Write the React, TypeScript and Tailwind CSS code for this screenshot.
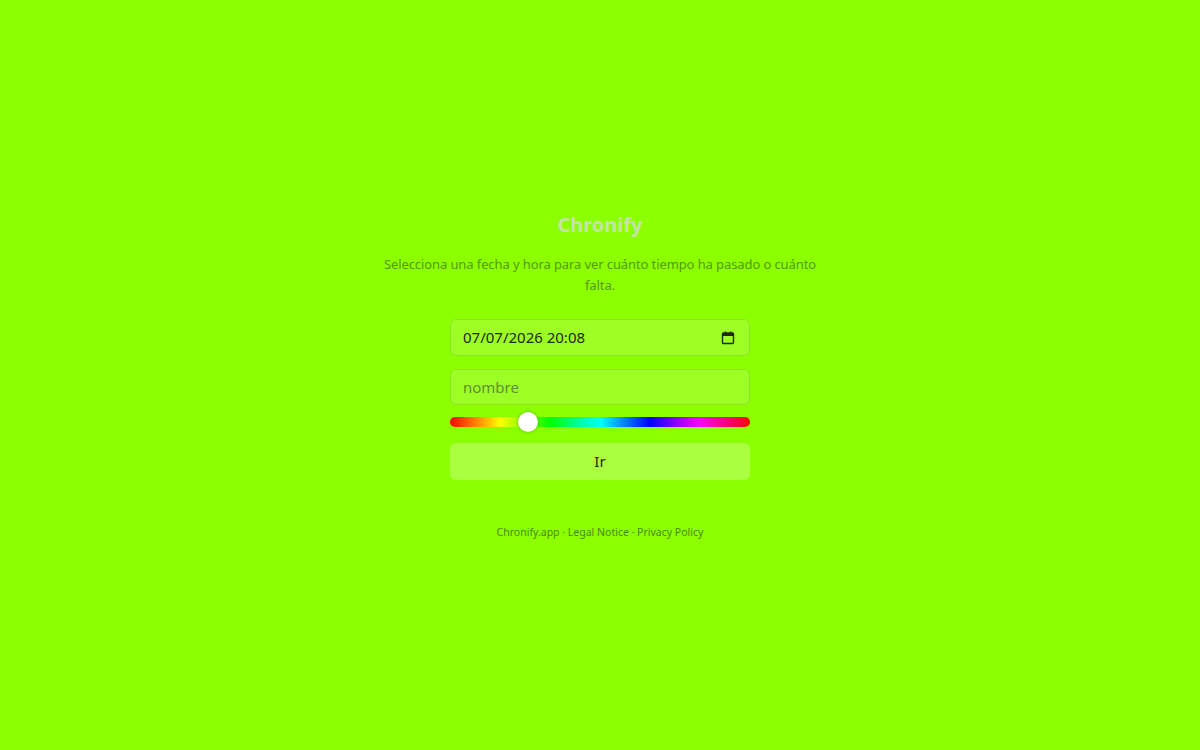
import React, { useState } from 'react';

const CalendarIcon = () => (
  <svg width="14" height="14" viewBox="0 0 14 14" fill="none">
    <rect x="1.5" y="2" width="11" height="10.5" rx="1" stroke="#1f2a10" strokeWidth="1.4" />
    <rect x="1.5" y="2" width="11" height="3" fill="#1f2a10" />
    <rect x="3.5" y="0.5" width="1.4" height="2.5" fill="#1f2a10" />
    <rect x="9.1" y="0.5" width="1.4" height="2.5" fill="#1f2a10" />
  </svg>
);

const HueSlider = ({ value, onChange }: { value: number; onChange: (v: number) => void }) => {
  const pct = value / 360;
  return (
    <div className="relative h-[22px] w-full flex items-center">
      <div className="h-[10px] w-full rounded-full bg-[linear-gradient(to_right,#ff0000,#ffff00,#00ff00,#00ffff,#0000ff,#ff00ff,#ff0000)]" />
      <div
        className="absolute top-[1px] h-5 w-5 rounded-full bg-white shadow-[0_0_3px_rgba(0,0,0,0.35)]"
        style={{ left: `calc(${pct} * (100% - 20px))` }}
      />
      <input
        type="range"
        min={0}
        max={360}
        value={value}
        onChange={(e) => onChange(Number(e.target.value))}
        className="absolute inset-0 w-full opacity-0 cursor-pointer"
      />
    </div>
  );
};

export default function App() {
  const [hue, setHue] = useState(87);
  const [name, setName] = useState('');
  return (
    <div
      className="min-h-screen w-full flex items-center justify-center bg-[#8cff00] font-['Noto_Sans','Open_Sans',sans-serif]"
      style={{ backgroundColor: `hsl(${hue}, 100%, 50%)` }}
    >
      <div className="flex flex-col items-center pt-[2px]">
        <h1 className="text-[20px] font-bold leading-[28px] text-[#c6e3a9]">Chronify</h1>
        <p className="mt-[15px] w-[450px] text-center text-[13px] tracking-[-0.1px] leading-[21px] text-[#549a0c]">
          Selecciona una fecha y hora para ver cuánto tiempo ha pasado o cuánto falta.
        </p>
        <div className="mt-[23px] flex w-[300px] flex-col">
          <div className="flex h-[37px] items-center justify-between rounded-[6px] border border-black/10 bg-white/15 pl-[12px] pr-[14px]">
            <span className="text-[15px] text-[#1c2a0c]">07/07/2026 20:08</span>
            <CalendarIcon />
          </div>
          <input
            value={name}
            onChange={(e) => setName(e.target.value)}
            placeholder="nombre"
            className="mt-[13px] h-[36px] rounded-[6px] border border-black/10 bg-white/15 px-[12px] text-[15px] text-[#1c2a0c] outline-none placeholder:text-[#5f8f2c]"
          />
          <div className="mt-[6px]">
            <HueSlider value={hue} onChange={setHue} />
          </div>
          <button className="mt-[10px] h-[37px] rounded-[6px] bg-white/25 text-[15px] text-[#1c2a0c]">
            Ir
          </button>
        </div>
        <footer className="mt-[45px] text-[10.5px] text-[#4a8a10]">
          Chronify.app · Legal Notice · Privacy Policy
        </footer>
      </div>
    </div>
  );
}
